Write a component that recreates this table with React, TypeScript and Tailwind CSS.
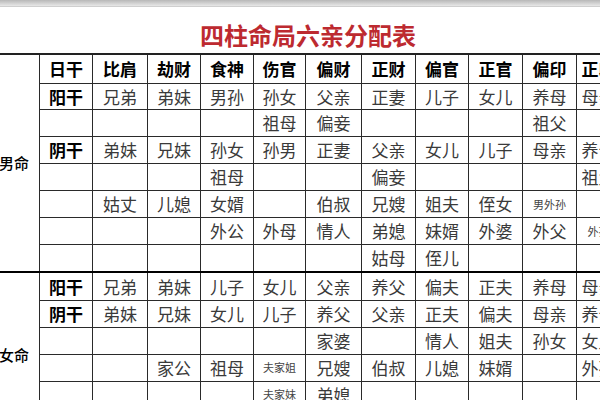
import React from "react";

type Cell = string | { t: string; small: true };

const headers = ["日干", "比肩", "劫财", "食神", "伤官", "偏财", "正财", "偏官", "正官", "偏印", "正印"];

const colWidths = ["w-[51px]", "w-[53px]", "w-[55px]", "w-[53px]", "w-[53px]", "w-[52px]", "w-[56px]", "w-[54px]", "w-[53px]", "w-[54px]", "w-[54px]", "w-[44px]"];

const s = (t: string): Cell => ({ t, small: true });

// 男命
const maleRows: Cell[][] = [
  ["阳干", "兄弟", "弟妹", "男孙", "孙女", "父亲", "正妻", "儿子", "女儿", "养母", "母亲"],
  ["", "", "", "", "祖母", "偏妾", "", "", "", "祖父", ""],
  ["阴干", "弟妹", "兄妹", "孙女", "孙男", "正妻", "父亲", "女儿", "儿子", "母亲", "养母"],
  ["", "", "", "祖母", "", "", "偏妾", "", "", "", "祖父"],
  ["", "姑丈", "儿媳", "女婿", "", "伯叔", "兄嫂", "姐夫", "侄女", s("男外孙"), ""],
  ["", "", "", "外公", "外母", "情人", "弟媳", "妹婿", "外婆", "外父", s("外孙")],
  ["", "", "", "", "", "", "姑母", "侄儿", "", "", ""],
];

// 女命
const femaleRows: Cell[][] = [
  ["阳干", "兄弟", "弟妹", "儿子", "女儿", "父亲", "养父", "偏夫", "正夫", "养母", "母亲"],
  ["阴干", "弟妹", "兄妹", "女儿", "儿子", "养父", "父亲", "正夫", "偏夫", "母亲", "养母"],
  ["", "", "", "", "", "家婆", "", "情人", "姐夫", "孙女", "女儿"],
  ["", "", "家公", "祖母", s("夫家姐"), "兄嫂", "伯叔", "儿媳", "妹婿", "", "外孙"],
  ["", "", "", "", s("夫家妹"), "弟媳", "", "", "", "", ""],
  ["", "", "", "", "", "", "", "", "", "", ""],
];

const maleHeights = ["h-[26px]", "h-[27px]", "h-[27px]", "h-[27px]", "h-[27px]", "h-[27px]", "h-[25px]"];
const femaleHeights = ["h-[29px]", "h-[26px]", "h-[27px]", "h-[27px]", "h-[27px]", "h-[30px]"];

function Td({ cell, idx, top }: { cell: Cell; idx: number; top?: boolean }) {
  const first = idx === 0;
  const base = `border border-[#2a2a2a] p-0 text-center align-middle whitespace-nowrap overflow-hidden ${top ? "border-t-2 border-t-black" : ""}`;
  if (typeof cell !== "string") {
    return <td className={`${base} text-[11px] text-[#444]`}>{cell.t}</td>;
  }
  return (
    <td className={`${base} ${first ? "font-bold text-black text-[17px]" : "text-[17px] text-[#3a3a3a]"}`}>
      {cell}
    </td>
  );
}

export default function App() {
  return (
    <div
      className="w-[600px] h-[400px] overflow-hidden bg-white relative"
      style={{ fontFamily: '"Noto Sans CJK SC", "Noto Sans", sans-serif' }}
    >
      <div className="h-[7px] bg-gradient-to-b from-[#b8b8b8] to-[#e8e8e8] border-b border-[#cfcfcf]" />
      <div className="h-[46px] flex justify-center pt-[16px] pl-[16px]">
        <h1 className="text-[24px] leading-none font-bold text-[#bd2a30]">四柱命局六亲分配表</h1>
      </div>

      <table className="table-fixed border-collapse ml-[-12px] w-[630px]">
        <colgroup>
          {colWidths.map((w, i) => (
            <col key={i} className={w} />
          ))}
        </colgroup>
        <tbody>
          <tr className="h-[29px]">
            <td rowSpan={8} className="border border-[#2a2a2a] border-t-2 border-t-[#222] p-0 text-center align-middle text-[15px] font-medium text-black">
              男命
            </td>
            {headers.map((h, i) => (
              <td key={i} className="border border-[#2a2a2a] border-t-2 border-t-[#222] p-0 text-center align-middle font-bold text-black text-[17px] whitespace-nowrap overflow-hidden">
                {h}
              </td>
            ))}
          </tr>
          {maleRows.map((row, r) => (
            <tr key={r} className={maleHeights[r]}>
              {row.map((c, i) => (
                <Td key={i} cell={c} idx={i} />
              ))}
            </tr>
          ))}
          {femaleRows.map((row, r) => (
            <tr key={`f${r}`} className={femaleHeights[r]}>
              {r === 0 && (
                <td rowSpan={6} className="border border-[#2a2a2a] border-t-2 border-t-black p-0 text-center align-middle text-[15px] font-medium text-black">
                  女命
                </td>
              )}
              {row.map((c, i) => (
                <Td key={i} cell={c} idx={i} top={r === 0} />
              ))}
            </tr>
          ))}
        </tbody>
      </table>
    </div>
  );
}
